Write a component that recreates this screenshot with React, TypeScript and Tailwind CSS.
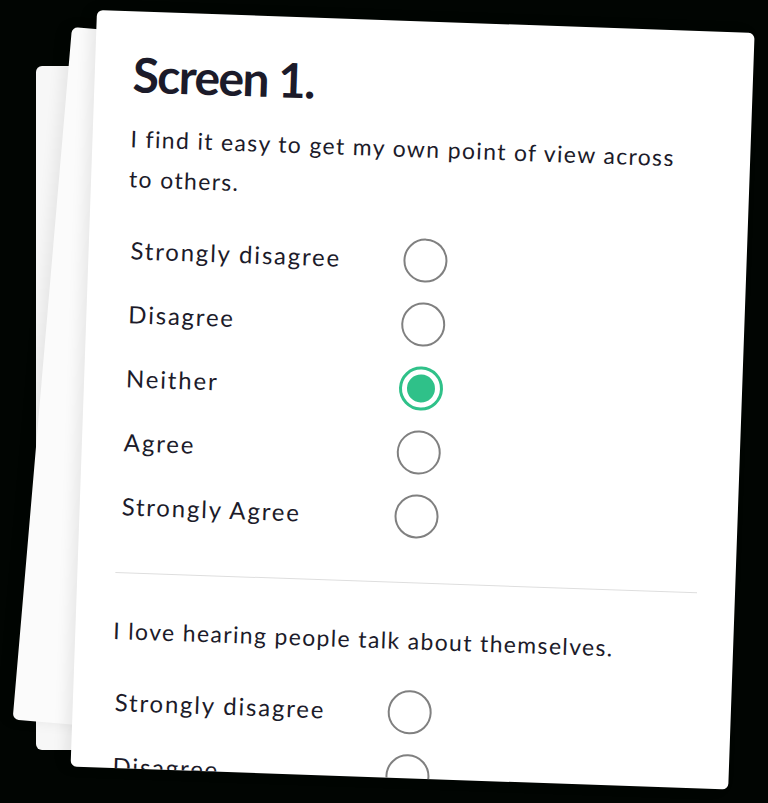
const FONT = { fontFamily: "Lato, 'Noto Sans', sans-serif" };

type Choice = { label: string; selected?: boolean };

const firstChoices: Choice[] = [
  { label: "Strongly disagree" },
  { label: "Disagree" },
  { label: "Neither", selected: true },
  { label: "Agree" },
  { label: "Strongly Agree" },
];

// only the top of the second question fits on the sheet
const secondChoices: Choice[] = [
  { label: "Strongly disagree" },
  { label: "Disagree" },
];

function Radio({ selected }: { selected?: boolean }) {
  if (selected) {
    return (
      <span className="flex h-[44px] w-[44px] shrink-0 items-center justify-center rounded-full border-[3px] border-[#2fc189]">
        <span className="h-[28px] w-[28px] rounded-full bg-[#2fc189]" />
      </span>
    );
  }
  return (
    <span className="h-[44px] w-[44px] shrink-0 rounded-full border-2 border-[#808080]" />
  );
}

function ChoiceList({ choices }: { choices: Choice[] }) {
  return (
    <div className="mt-[30px] flex flex-col gap-[20px]">
      {choices.map((c) => (
        <div key={c.label} className="flex h-[44px] items-center">
          <span className="w-[277px] pl-[4px] text-[24px] tracking-[1.8px] text-[#1c1b2a]">
            {c.label}
          </span>
          <Radio selected={c.selected} />
        </div>
      ))}
    </div>
  );
}

export default function App() {
  return (
    <div
      className="relative h-[803px] w-[768px] overflow-hidden bg-[#010502]"
      style={FONT}
    >
      {/* back of the stack */}
      <div className="absolute left-[36px] top-[66px] h-[684px] w-[640px] rounded-[6px] bg-[#f7f7f7]" />
      <div className="absolute left-[72px] top-[27px] h-[695px] w-[640px] origin-top-left rotate-[4.9deg] rounded-[6px] bg-[#fbfbfb] shadow-[-6px_0_14px_rgba(0,0,0,0.07)]" />

      {/* front sheet */}
      <div className="absolute left-[97px] top-[10px] h-[757px] w-[658px] origin-top-left rotate-[2deg] overflow-hidden rounded-[6px] bg-white shadow-[-6px_0_14px_rgba(0,0,0,0.08)]">
        <div className="px-[38px] pt-[34px] text-[#1c1b2a]">
          <h1 className="text-[48px] font-bold leading-[58px] tracking-[-1.6px]">
            Screen 1.
          </h1>
          <p className="mt-[15px] w-[570px] text-[23px] leading-[40px] tracking-[1.35px]">
            I find it easy to get my own point of view across to others.
          </p>
          <ChoiceList choices={firstChoices} />

          <div className="mt-[44px] h-px bg-[#dedede]" />

          <p className="mt-[37px] text-[23px] leading-[40px] tracking-[1.35px]">
            I love hearing people talk about themselves.
          </p>
          <ChoiceList choices={secondChoices} />
        </div>
      </div>
    </div>
  );
}
